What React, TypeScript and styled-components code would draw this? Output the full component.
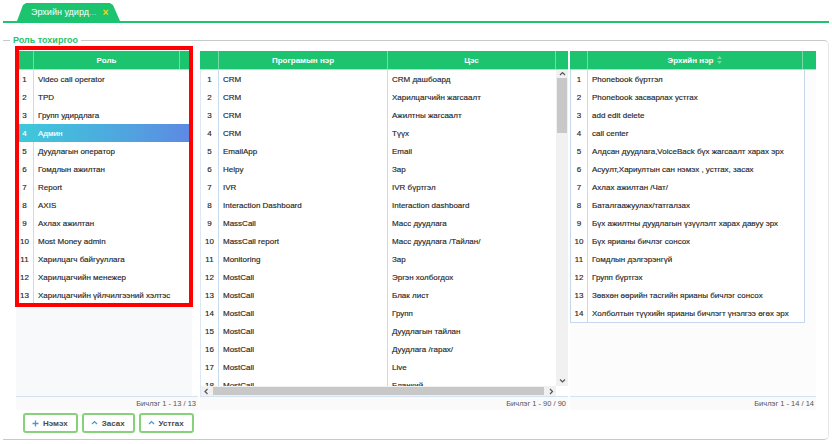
import React from "react";
import styled, { createGlobalStyle } from "styled-components";

const GREEN = "#1dc46f";
const LINE = "#c9dcef";
const FONT = `"Liberation Sans", Arial, sans-serif`;

const Global = createGlobalStyle`
  html, body { margin: 0; padding: 0; background: #fff; }
  body { font-family: ${FONT}; color: #222; }
  * { box-sizing: border-box; }
`;

const Page = styled.div`
  width: 832px;
  height: 444px;
  padding: 0 3px;
  overflow: hidden;
`;

const TabStrip = styled.div`
  display: flex;
  align-items: flex-end;
  height: 23px;
  padding-left: 14px;
  border-bottom: 2px solid ${GREEN};
`;

const Tab = styled.div`
  width: 103px;
  height: 18px;
  display: flex;
  align-items: center;
  padding-left: 14px;
  background: ${GREEN};
  clip-path: polygon(0 100%, 6px 2px, 9px 0, calc(100% - 10px) 0, calc(100% - 7px) 2px, 100% 100%);
  color: #fff;
  font-size: 9px;
  white-space: nowrap;
`;

const Ellipsis = styled.span`
  color: #9fe6c0;
`;

const TabClose = styled.span`
  margin-left: 6px;
  color: #ffd400;
  font-weight: bold;
  font-size: 10px;
`;

const Fieldset = styled.fieldset`
  margin: 11px 0 0;
  padding: 5px 11px 6px 13px;
  min-width: 0;
  border: 1px solid #c9c9c9;
  border-left: none;
  border-right-color: #e6e6e6;
  border-radius: 0 5px 5px 0;
`;

const Legend = styled.legend`
  margin-left: -6px;
  padding: 0 3px;
  font-size: 9px;
  line-height: 12px;
  font-weight: bold;
  color: ${GREEN};
`;

const Panels = styled.div`
  display: flex;
  gap: 2px;
`;

const Panel = styled.div<{ $w: number }>`
  position: relative;
  flex: none;
  width: ${(p) => p.$w}px;
  display: flex;
  flex-direction: column;
`;

const Highlight = styled.div`
  position: absolute;
  left: -1px;
  top: -5px;
  width: 178px;
  height: 261px;
  border: 4px solid #ff0000;
  pointer-events: none;
`;

const HeaderRow = styled.div<{ $cols: string; $w?: number }>`
  display: grid;
  grid-template-columns: ${(p) => p.$cols};
  width: ${(p) => (p.$w ? `${p.$w}px` : "100%")};
  height: 19px;
  background: ${GREEN};
  border-bottom: 1px solid #a9e2c4;
`;

const HeadCell = styled.div`
  display: flex;
  align-items: center;
  justify-content: center;
  gap: 4px;
  color: #fff;
  font-size: 8px;
  font-weight: bold;
  border-right: 1px solid rgba(255, 255, 255, 0.4);
  &:last-child {
    border-right: none;
  }
`;

const Body = styled.div<{ $w?: number; $bg?: string }>`
  display: flex;
  width: ${(p) => (p.$w ? `${p.$w}px` : "100%")};
  height: 326px;
  background: ${(p) => p.$bg || "#fff"};
`;

const RowList = styled.div`
  display: flex;
  flex-direction: column;
  width: 100%;
`;

const Row = styled.div<{ $cols: string; $selected?: boolean }>`
  display: grid;
  grid-template-columns: ${(p) => p.$cols};
  flex: none;
  height: 18px;
  overflow: hidden;
  font-size: 8px;
  line-height: 20px;
  white-space: nowrap;
  -webkit-text-stroke: 0.15px currentColor;
  background: ${(p) => (p.$selected ? "linear-gradient(90deg, #3dcadb 0%, #4fa6df 60%, #5e88e4 100%)" : "#fff")};
  color: ${(p) => (p.$selected ? "#fff" : "#262626")};
`;

const IndexCell = styled.div<{ $selected?: boolean }>`
  text-align: center;
  border-right: 1px solid ${(p) => (p.$selected ? "transparent" : LINE)};
`;

const TextCell = styled.div<{ $divider?: boolean }>`
  padding-left: 4px;
  overflow: hidden;
  border-right: ${(p) => (p.$divider ? `1px solid ${LINE}` : "none")};
`;

const Footer = styled.div`
  height: 14px;
  border-top: 1px solid #d3e3f2;
  background: #fafafa;
  padding-right: 2px;
  font-size: 7.5px;
  line-height: 14px;
  color: #555;
  text-align: right;
  white-space: nowrap;
`;

const ScrollArea = styled.div`
  display: flex;
  flex-direction: column;
  width: 356px;
  border-left: 1px solid #dde8f3;
`;

const Viewport = styled.div`
  height: 316px;
  overflow: hidden;
`;

const HScroll = styled.div`
  display: flex;
  align-items: center;
  height: 10px;
  background: #f1f1f1;
`;

const ArrowBox = styled.div<{ $w?: number; $h?: number }>`
  flex: none;
  display: flex;
  align-items: center;
  justify-content: center;
  width: ${(p) => (p.$w ? `${p.$w}px` : "100%")};
  height: ${(p) => (p.$h ? `${p.$h}px` : "100%")};
`;

const HThumb = styled.div`
  flex: 1;
  height: 8px;
  margin: 0 2px;
  background: #c8c8c8;
`;

const VScroll = styled.div`
  flex: none;
  width: 12px;
  display: flex;
  flex-direction: column;
`;

const VTrack = styled.div`
  height: 316px;
  display: flex;
  flex-direction: column;
  background: #f1f1f1;
`;

const VThumb = styled.div`
  height: 55px;
  margin: 0 1px;
  background: #c8c8c8;
`;

const Spacer = styled.div`
  flex: 1;
`;

const TableBox = styled.div`
  align-self: flex-start;
  width: 235px;
  border: 1px solid #c5d8ec;
  border-top: none;
`;

const ActionBar = styled.div`
  display: flex;
  gap: 4px;
  margin-top: 3px;
  padding-left: 7px;
`;

const ActionButton = styled.button`
  display: inline-flex;
  align-items: center;
  gap: 4px;
  height: 20px;
  padding: 0 8px 0 7px;
  border: 2px solid #86d27a;
  border-radius: 3px;
  background: #fff;
  font-family: ${FONT};
  font-size: 8px;
  font-weight: bold;
  color: #4a4a4a;
`;

const Chevron = ({ dir, color = "#555" }: { dir: "up" | "down" | "left" | "right"; color?: string }) => {
  const d =
    dir === "up"
      ? "M1 4 L3.5 1.5 L6 4"
      : dir === "down"
      ? "M1 1.5 L3.5 4 L6 1.5"
      : dir === "left"
      ? "M4.5 1 L2 3.5 L4.5 6"
      : "M2 1 L4.5 3.5 L2 6";
  const vertical = dir === "up" || dir === "down";
  return (
    <svg width={vertical ? 7 : 6} height={vertical ? 6 : 7} viewBox={vertical ? "0 0 7 6" : "0 0 6 7"}>
      <path d={d} fill="none" stroke={color} strokeWidth="1.2" />
    </svg>
  );
};

const PlusIcon = () => (
  <svg width="7" height="7" viewBox="0 0 7 7">
    <path d="M3.5 0.5 V6.5 M0.5 3.5 H6.5" stroke="#4b97d6" strokeWidth="1.3" />
  </svg>
);

const SortIcon = () => (
  <svg width="5" height="8" viewBox="0 0 5 8">
    <path d="M2.5 0 L5 3 H0 Z M2.5 8 L5 5 H0 Z" fill="rgba(255,255,255,0.4)" />
  </svg>
);

const roles = [
  "Video call operator",
  "TPD",
  "Групп удирдлага",
  "Админ",
  "Дуудлагын оператор",
  "Гомдлын ажилтан",
  "Report",
  "AXIS",
  "Ахлах ажилтан",
  "Most Money admin",
  "Харилцагч байгууллага",
  "Харилцагчийн менежер",
  "Харилцагчийн үйлчилгээний хэлтэс",
];

const programs: [string, string][] = [
  ["CRM", "CRM дашбоард"],
  ["CRM", "Харилцагчийн жагсаалт"],
  ["CRM", "Ажилтны жагсаалт"],
  ["CRM", "Түүх"],
  ["EmailApp", "Email"],
  ["Helpy", "Зар"],
  ["IVR", "IVR бүртгэл"],
  ["Interaction Dashboard", "Interaction dashboard"],
  ["MassCall", "Масс дуудлага"],
  ["MassCall report", "Масс дуудлага /Тайлан/"],
  ["Monitoring", "Зар"],
  ["MostCall", "Эргэн холбогдох"],
  ["MostCall", "Блак лист"],
  ["MostCall", "Групп"],
  ["MostCall", "Дуудлагын тайлан"],
  ["MostCall", "Дуудлага /гарах/"],
  ["MostCall", "Live"],
  ["MostCall", "Бланкий"],
];

const rights = [
  "Phonebook бүртгэл",
  "Phonebook засварлах устгах",
  "add edit delete",
  "call center",
  "Алдсан дуудлага,VoiceBack бүх жагсаалт харах эрх",
  "Асуулт,Хариултын сан нэмэх , устгах, засах",
  "Ахлах ажилтан /Чат/",
  "Баталгаажуулах/татгалзах",
  "Бүх ажилтны дуудлагын үзүүлэлт харах давуу эрх",
  "Бүх ярианы бичлэг сонсох",
  "Гомдлын дэлгэрэнгүй",
  "Групп бүртгэх",
  "Зөвхөн өөрийн тасгийн ярианы бичлэг сонсох",
  "Холболтын түүхийн ярианы бичлэгт үнэлгээ өгөх эрх",
];

export default function App() {
  return (
    <Page>
      <Global />
      <TabStrip>
        <Tab>
          Эрхийн удирд<Ellipsis>...</Ellipsis>
          <TabClose>×</TabClose>
        </Tab>
      </TabStrip>
      <Fieldset>
        <Legend>Роль тохиргоо</Legend>
        <Panels>
          <Panel $w={182}>
            <HeaderRow $cols="18px 146px 12px" $w={176}>
              <HeadCell />
              <HeadCell>Роль</HeadCell>
              <HeadCell />
            </HeaderRow>
            <Body $w={176} $bg="#f8f9fb">
              <RowList>
                {roles.map((r, i) => (
                  <Row key={r} $cols="18px 1fr" $selected={i === 3}>
                    <IndexCell $selected={i === 3}>{i + 1}</IndexCell>
                    <TextCell>{r}</TextCell>
                  </Row>
                ))}
              </RowList>
            </Body>
            <Footer>Бичлэг 1 - 13 / 13</Footer>
            <Highlight />
          </Panel>

          <Panel $w={368}>
            <HeaderRow $cols="19px 169px 168px 12px">
              <HeadCell />
              <HeadCell>Програмын нэр</HeadCell>
              <HeadCell>Цэс</HeadCell>
              <HeadCell />
            </HeaderRow>
            <Body>
              <ScrollArea>
                <Viewport>
                  {programs.map(([p, m], i) => (
                    <Row key={i} $cols="18px 169px 168px">
                      <IndexCell>{i + 1}</IndexCell>
                      <TextCell $divider>{p}</TextCell>
                      <TextCell>{m}</TextCell>
                    </Row>
                  ))}
                </Viewport>
                <HScroll>
                  <ArrowBox $w={10}>
                    <Chevron dir="left" />
                  </ArrowBox>
                  <HThumb />
                  <ArrowBox $w={10}>
                    <Chevron dir="right" />
                  </ArrowBox>
                </HScroll>
              </ScrollArea>
              <VScroll>
                <VTrack>
                  <ArrowBox $h={8}>
                    <Chevron dir="up" />
                  </ArrowBox>
                  <VThumb />
                  <Spacer />
                  <ArrowBox $h={10}>
                    <Chevron dir="down" />
                  </ArrowBox>
                </VTrack>
              </VScroll>
            </Body>
            <Footer>Бичлэг 1 - 90 / 90</Footer>
          </Panel>

          <Panel $w={246}>
            <HeaderRow $cols="18px 215px 13px">
              <HeadCell />
              <HeadCell>
                Эрхийн нэр <SortIcon />
              </HeadCell>
              <HeadCell />
            </HeaderRow>
            <Body $bg="#fcfcfd">
              <TableBox>
                {rights.map((r, i) => (
                  <Row key={r} $cols="17px 1fr">
                    <IndexCell>{i + 1}</IndexCell>
                    <TextCell>{r}</TextCell>
                  </Row>
                ))}
              </TableBox>
            </Body>
            <Footer>Бичлэг 1 - 14 / 14</Footer>
          </Panel>
        </Panels>
        <ActionBar>
          <ActionButton>
            <PlusIcon />
            Нэмэх
          </ActionButton>
          <ActionButton>
            <Chevron dir="up" color="#4b97d6" />
            Засах
          </ActionButton>
          <ActionButton>
            <Chevron dir="up" color="#4b97d6" />
            Устгах
          </ActionButton>
        </ActionBar>
      </Fieldset>
    </Page>
  );
}
